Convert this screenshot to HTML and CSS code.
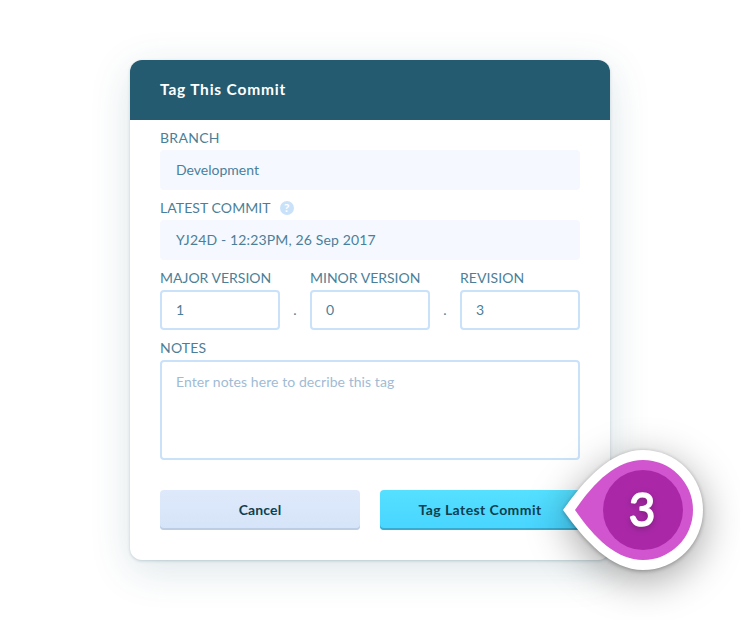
FILE: index.html
```
<!DOCTYPE html>
<html lang="en">
<head>
<meta charset="utf-8">
<title>Tag This Commit</title>
<link rel="stylesheet" href="styles.css">
</head>
<body>
<main class="dialog">
  <header class="header"><h1 class="title">Tag This Commit</h1></header>
  <form class="form">
    <div class="field">
      <div class="label"><span class="t-branch">BRANCH</span></div>
      <div class="value"><span>Development</span></div>
    </div>
    <div class="field">
      <div class="label"><span class="t-latest">LATEST COMMIT</span><span class="help">?</span></div>
      <div class="value"><span class="t-commit">YJ24D - 12:23PM, 26 Sep 2017</span></div>
    </div>
    <div class="versions">
      <div class="field"><div class="label"><span>MAJOR VERSION</span></div><div class="box">1</div></div>
      <span class="dot">.</span>
      <div class="field"><div class="label"><span>MINOR VERSION</span></div><div class="box">0</div></div>
      <span class="dot">.</span>
      <div class="field"><div class="label"><span class="t-revision">REVISION</span></div><div class="box">3</div></div>
    </div>
    <div class="field">
      <div class="label"><span class="t-notes">NOTES</span></div>
      <div class="box notes"><span class="t-placeholder">Enter notes here to decribe this tag</span></div>
    </div>
    <div class="actions">
      <button type="button" class="button"><span class="t-cancel">Cancel</span></button>
      <button type="button" class="button primary"><span class="t-tag">Tag Latest Commit</span></button>
    </div>
  </form>
  <svg class="pin" viewBox="0 0 140 120" width="140" height="120">
    <path fill="#fff" d="M0 60C22 29 48 0 80 0A60 60 0 0 1 80 120C48 120 22 91 0 60Z"/>
    <path fill="#d055ce" d="M12 60C32 31 54 10 80 10A50 50 0 0 1 80 110C54 110 32 89 12 60Z"/>
    <circle cx="80" cy="60" r="40" fill="#aa28a8"/>
    <text class="pin-number" x="79" y="76" text-anchor="middle">3</text>
  </svg>
</main>
</body>
</html>
```
FILE: styles.css
```
* { box-sizing: border-box; }
body { margin: 0; width: 740px; height: 620px; overflow: hidden; background: #fff; padding: 60px 130px; font: 14px/20px Lato, "Open Sans", sans-serif; color: #4b7f99; }
.dialog { position: relative; width: 480px; height: 500px; border-radius: 12px; background: #fff; box-shadow: 0 1px 3px rgba(36,92,112,.24), 0 10px 40px rgba(36,92,112,.16); }
.header { height: 60px; padding: 19px 30px 21px; border-radius: 12px 12px 0 0; background: #245b70; }
.title { margin: 0; color: #fff; font-size: 15.5px; line-height: 20px; font-weight: 700; letter-spacing: .8px; }
.form { padding: 8px 30px 0; }
.field { margin-bottom: 8px; }
.label { display: flex; align-items: center; height: 20px; margin-bottom: 2px; white-space: nowrap; }
.value { height: 40px; padding: 10px 16px; border-radius: 4px; background: #f5f8ff; }
.help { width: 14px; height: 14px; margin-left: 9px; border-radius: 50%; background: #c9e2fa; color: #fff; font-size: 12px; line-height: 14px; font-weight: 700; text-align: center; }
.t-branch { letter-spacing: .3px; }
.t-latest { letter-spacing: .08px; }
.t-commit { letter-spacing: .15px; }
.t-revision { letter-spacing: .06px; }
.t-notes { letter-spacing: .2px; }
.t-placeholder { letter-spacing: .07px; }
.t-cancel { letter-spacing: .15px; }
.t-tag { letter-spacing: .43px; }
.versions { display: flex; }
.versions .field { width: 120px; }
.dot { width: 30px; padding-top: 32px; text-align: center; }
.box { height: 40px; padding: 8px 14px; border: 2px solid #c9e2fa; border-radius: 4px; background: #fff; }
.notes { height: 100px; padding-top: 10px; color: #a1bbd4; }
.actions { display: flex; gap: 20px; padding-top: 22px; }
.button { width: 200px; height: 40px; padding: 0; border: 0; border-radius: 4px; background: linear-gradient(#dee9fb, #d6e4f9); box-shadow: inset 0 -2px #bdcde4; color: #103f50; font: 700 14px/20px Lato, "Open Sans", sans-serif; }
.primary { background: linear-gradient(#55e0ff, #48d5ff); box-shadow: inset 0 -2px #38acd0; }
.pin { position: absolute; left: 433px; top: 390px; overflow: visible; filter: drop-shadow(0 1px 2px rgba(0,0,0,.3)) drop-shadow(0 10px 20px rgba(0,0,0,.36)); }
.pin-number { font: 400 46px Lato, sans-serif; fill: #fff; stroke: #fff; stroke-width: 1.7px; stroke-linejoin: round; filter: drop-shadow(0 2px 3px rgba(0,0,0,.25)); }
```
